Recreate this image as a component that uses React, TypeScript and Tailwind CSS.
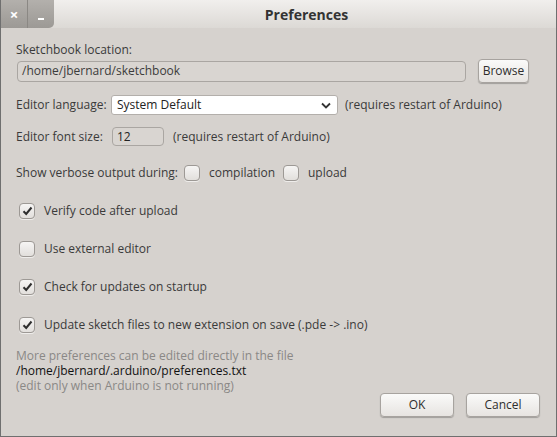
import React from "react";

const font = { fontFamily: '"Open Sans", "Noto Sans", sans-serif' };

const Check = ({ checked }: { checked?: boolean }) => (
  <div className="w-[16px] h-[16px] rounded-[4px] border border-[#9d9995] bg-gradient-to-b from-[#f6f5f4] to-[#e2dfdc] shadow-[0_1px_0_rgba(255,255,255,0.6)] flex items-center justify-center shrink-0">
    {checked && (
      <svg width="11" height="10" viewBox="0 0 11 10">
        <path d="M1.5 5.2 L4.2 8 L9.5 1.5" fill="none" stroke="#2e2e2e" strokeWidth="2" />
      </svg>
    )}
  </div>
);

const Btn = ({ label, w }: { label: string; w: string }) => (
  <button
    className={`${w} h-[24px] rounded-[4px] border border-[#a7a39f] bg-gradient-to-b from-[#fafaf9] to-[#e7e4e1] shadow-[0_1px_1px_rgba(0,0,0,0.25)] text-[12px] text-[#2e2e2e] flex items-center justify-center`}
  >
    {label}
  </button>
);

const prefs = [
  { label: "Verify code after upload", checked: true },
  { label: "Use external editor", checked: false },
  { label: "Check for updates on startup", checked: true },
  { label: "Update sketch files to new extension on save (.pde -> .ino)", checked: true },
];

export default function App() {
  return (
    <div
      style={font}
      className="w-[557px] h-[437px] bg-[#d6d2ce] border-x border-b border-[#6f6f6f] flex flex-col text-[12px] text-[#3a3a3a] overflow-hidden"
    >
      {/* title bar */}
      <div className="h-[28px] relative bg-gradient-to-b from-[#f1efed] to-[#dcd9d5] flex items-center justify-center shrink-0">
        <div className="absolute left-0 top-0 flex h-[28px]">
          <div className="w-[27px] h-full bg-gradient-to-b from-[#b3b0ac] to-[#9c9995] border-r border-[#8b8884] flex items-center justify-center text-white font-bold text-[15px] leading-none">
            ×
          </div>
          <div className="w-[26px] h-full bg-gradient-to-b from-[#b3b0ac] to-[#9c9995] rounded-br-[5px] flex items-end justify-center pb-[8px]">
            <div className="w-[6px] h-[2px] bg-white" />
          </div>
        </div>
        <span className="text-[14px] font-bold text-[#333] ml-[56px]">Preferences</span>
      </div>

      <div className="flex flex-col pl-[15px] pr-[16px]">
        <div className="mt-[14px] leading-[15px]">Sketchbook location:</div>
        <div className="mt-[2px] flex items-center">
          <div className="ml-[1px] w-[449px] h-[21px] rounded-[4px] border border-[#aaa6a2] bg-[#d9d5d1] flex items-center px-[4px] text-[#3c3c3c]">
            /home/jbernard/sketchbook
          </div>
          <div className="ml-[12px]">
            <Btn label="Browse" w="w-[51px]" />
          </div>
        </div>

        <div className="mt-[12px] flex items-center h-[20px]">
          <span className="w-[95px]">Editor language:</span>
          <div className="w-[227px] h-[20px] rounded-[3px] border border-[#b3afab] bg-white flex items-center justify-between pl-[5px] pr-[6px] text-[#222]">
            <span>System Default</span>
            <svg width="10" height="7" viewBox="0 0 10 7">
              <path d="M1 1.5 L5 5.5 L9 1.5" fill="none" stroke="#333" strokeWidth="1.8" />
            </svg>
          </div>
          <span className="ml-[7px]">(requires restart of Arduino)</span>
        </div>

        <div className="mt-[12px] flex items-center h-[19px]">
          <span className="w-[96px]">Editor font size:</span>
          <div className="w-[52px] h-[19px] rounded-[4px] border border-[#aaa6a2] bg-[#d9d5d1] flex items-center px-[4px] text-[#222]">
            12
          </div>
          <span className="ml-[9px]">(requires restart of Arduino)</span>
        </div>

        <div className="mt-[19px] flex items-center h-[16px]">
          <span>Show verbose output during:</span>
          <div className="ml-[6px]">
            <Check />
          </div>
          <span className="ml-[9px]">compilation</span>
          <div className="ml-[8px]">
            <Check />
          </div>
          <span className="ml-[9px]">upload</span>
        </div>

        <div className="mt-[22px] flex flex-col gap-[22px] pl-[3px]">
          {prefs.map((p, i) => (
            <div key={i} className="flex items-center h-[16px]">
              <Check checked={p.checked} />
              <span className="ml-[9px]">{p.label}</span>
            </div>
          ))}
        </div>

        <div className="mt-[15px] leading-[15px]">
          <div className="text-[#8a8886]">More preferences can be edited directly in the file</div>
          <div className="text-[#111]">/home/jbernard/.arduino/preferences.txt</div>
          <div className="text-[#8a8886]">(edit only when Arduino is not running)</div>
        </div>

        <div className="flex justify-end gap-[12px] mt-[0px]">
          <Btn label="OK" w="w-[74px]" />
          <Btn label="Cancel" w="w-[74px]" />
        </div>
      </div>
    </div>
  );
}
